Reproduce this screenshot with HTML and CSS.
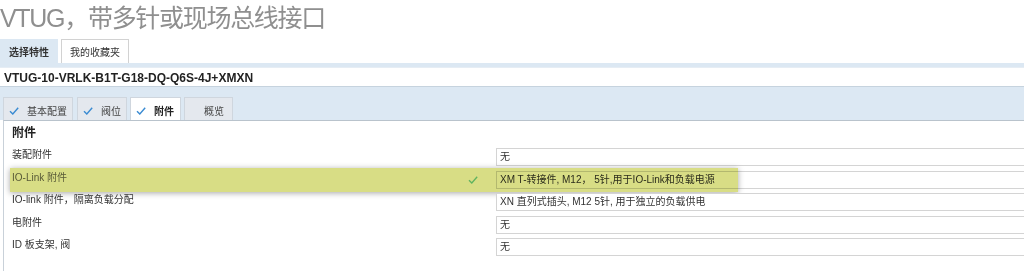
FILE: index.html
```html
<!DOCTYPE html>
<html lang="zh-CN">
<head>
  <meta charset="UTF-8">
  <title>VTUG，带多针或现场总线接口</title>
  <link rel="stylesheet" href="styles.css">
</head>
<body>
<div class="page">

  <h1 class="title">VTUG，带多针或现场总线接口</h1>

  <div class="main-tabs">
    <span class="main-tab active">选择特性</span>
    <span class="main-tab">我的收藏夹</span>
  </div>

  <div class="config-band">
    <div class="code-box">VTUG-10-VRLK-B1T-G18-DQ-Q6S-4J+XMXN</div>
    <div class="sub-tabs">
      <span class="sub-tab tab-1">
        <svg class="tick" viewBox="0 0 10 8"><path d="M1 4.2 L3.8 7 L9.2 0.8"/></svg>基本配置
      </span>
      <span class="sub-tab tab-2">
        <svg class="tick" viewBox="0 0 10 8"><path d="M1 4.2 L3.8 7 L9.2 0.8"/></svg>阀位
      </span>
      <span class="sub-tab tab-3 active">
        <svg class="tick" viewBox="0 0 10 8"><path d="M1 4.2 L3.8 7 L9.2 0.8"/></svg>附件
      </span>
      <span class="sub-tab tab-4">概览</span>
    </div>
  </div>

  <!-- 附件面板 -->
  <div class="panel">
    <div class="panel-title">附件</div>
    <div class="fields">
      <div class="field">
        <span class="label">装配附件</span>
        <div class="value">无</div>
      </div>
      <div class="field highlighted">
        <span class="label">IO-Link 附件</span>
        <div class="value">XM T-转接件, M12， 5针,用于IO-Link和负载电源</div>
        <div class="highlight">
          <svg class="ok" viewBox="0 0 10 8"><path d="M1 4.2 L3.8 7 L9.2 0.8"/></svg>
        </div>
      </div>
      <div class="field">
        <span class="label">IO-link 附件，隔离负载分配</span>
        <div class="value">XN 直列式插头, M12 5针, 用于独立的负载供电</div>
      </div>
      <div class="field">
        <span class="label">电附件</span>
        <div class="value">无</div>
      </div>
      <div class="field">
        <span class="label">ID 板支架, 阀</span>
        <div class="value">无</div>
      </div>
    </div>
  </div>

</div>
</body>
</html>
```

FILE: styles.css
```css
html, body {
  margin: 0;
  overflow: hidden;
}
body {
  font-family: "Liberation Sans", "Noto Sans CJK SC", sans-serif;
  color: #333;
  background: #fff;
}
.page {
  width: 1060px;
}
.title {
  margin: 0;
  padding-top: 3px;
  height: 36px;
  font-size: 25px;
  font-weight: normal;
  letter-spacing: -1.3px;
  line-height: 30px;
  color: #8f8f8f;
  white-space: nowrap;
}
/* 顶部标签 */
.main-tabs {
  display: flex;
  height: 24px;
}
.main-tab {
  display: flex;
  align-items: center;
  justify-content: center;
  font-size: 10px;
  color: #333;
  box-sizing: border-box;
}
.main-tab.active {
  width: 58px;
  background: #dce8f3;
  font-weight: bold;
}
.main-tab:not(.active) {
  width: 68px;
  margin-left: 3px;
  border: 1px solid #d2d2d2;
  border-bottom: none;
}
.config-band {
  background: #dce8f3;
  padding-top: 4px;
}
.code-box {
  background: #fff;
  border-top: 1px solid #e6edf4;
  border-bottom: 1px solid #c6d3de;
  padding: 3px 0 0 4px;
  line-height: 15px;
  font-size: 12px;
  font-weight: bold;
  color: #222;
}
.sub-tabs {
  display: flex;
  gap: 3px;
  margin-top: 10px;
  padding-left: 3px;
  height: 23px;
}
.sub-tab {
  display: flex;
  align-items: center;
  box-sizing: border-box;
  padding: 3px 0 0 5px;
  background: #e4e8ee;
  border: 1px solid #cfd6de;
  border-bottom: none;
  font-size: 10px;
  color: #444;
}
.sub-tab.active {
  background: #fff;
  font-weight: bold;
  color: #222;
}
.tab-1 { width: 70px; margin-right: 1px; }
.tab-2 { width: 50px; }
.tab-3 { width: 51px; }
.tab-4 { width: 49px; padding-left: 19px; }
.tick {
  width: 10px;
  height: 8px;
  margin-right: 8px;
  fill: none;
  stroke: #3a8bd2;
  stroke-width: 1.4;
}
/* 附件面板 */
.panel {
  margin-left: 3px;
  border-top: 1px solid #b9c3cc;
  border-left: 1px solid #c9d1d9;
  padding: 4px 0 0 8px;
  height: 146px;
}
.panel-title {
  font-size: 12px;
  font-weight: bold;
  line-height: 16px;
  color: #222;
}
.fields {
  margin-top: 7px;
}
.field {
  display: grid;
  grid-template-columns: 484px 1fr;
  height: 22.5px;
  position: relative;
}
.label {
  font-size: 10px;
  line-height: 14px;
  color: #333;
}
.value {
  height: 16px;
  line-height: 16px;
  border: 1px solid #d4d4d4;
  padding-left: 3px;
  font-size: 10px;
  color: #333;
  background: #fff;
}
.highlighted .label {
  color: #6a6a6a;
}
.highlight {
  position: absolute;
  left: -2px;
  top: -2.5px;
  width: 728px;
  height: 23.5px;
  background: #d8dd85;
  mix-blend-mode: multiply;
  box-shadow: 0 1px 6px rgba(0, 0, 0, 0.35);
  display: flex;
  align-items: center;
}
.ok {
  width: 10px;
  height: 8px;
  margin-left: 458px;
  fill: none;
  stroke: #5fb35f;
  stroke-width: 1.3;
}
```
